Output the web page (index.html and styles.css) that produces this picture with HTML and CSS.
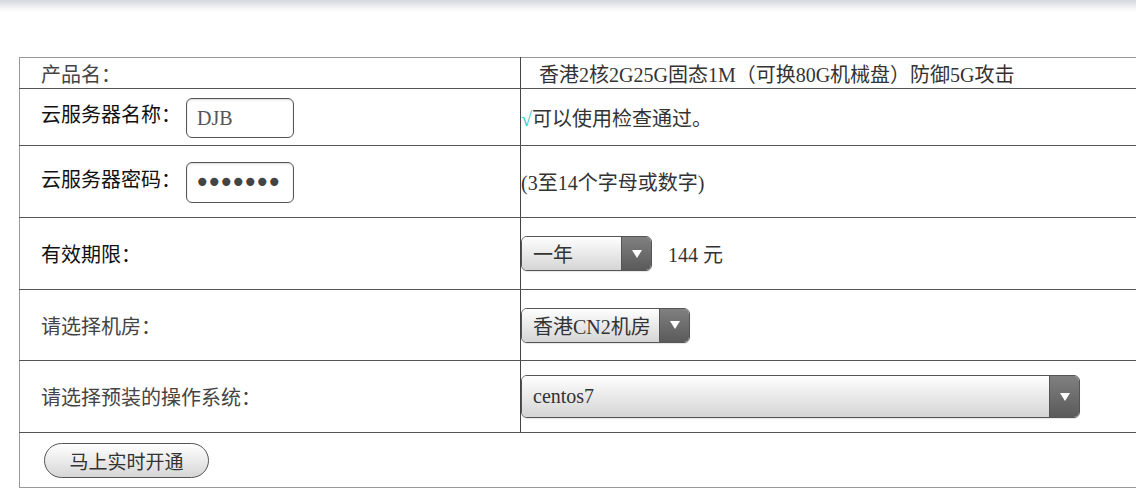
FILE: index.html
```html
<!DOCTYPE html>
<html lang="zh-CN">
<head>
<meta charset="utf-8">
<title>云服务器开通</title>
<link rel="stylesheet" href="styles.css">
</head>
<body>
<div class="topbar"></div>
<div class="page">
  <table class="order">
    <colgroup><col class="c1"><col class="c2"></colgroup>
    <tr class="r1">
      <td class="lbl muted">产品名：</td>
      <td class="val pname">香港2核2G25G固态1M（可换80G机械盘）防御5G攻击</td>
    </tr>
    <tr class="r2">
      <td class="lbl">云服务器名称：<input class="field" type="text" value="DJB"></td>
      <td class="val"><span class="ok">√</span>可以使用检查通过。</td>
    </tr>
    <tr class="r3">
      <td class="lbl">云服务器密码：<input class="field pw" type="password" value="1234567"></td>
      <td class="val">(3至14个字母或数字)</td>
    </tr>
    <tr class="r4">
      <td class="lbl">有效期限：</td>
      <td class="val">
        <div class="sel year"><span class="v">一年</span><span class="a"><i class="tri"></i></span></div><span class="price">144 元</span>
      </td>
    </tr>
    <tr class="r5">
      <td class="lbl muted">请选择机房：</td>
      <td class="val">
        <div class="sel room"><span class="v">香港CN2机房</span><span class="a"><i class="tri"></i></span></div>
      </td>
    </tr>
    <tr class="r6">
      <td class="lbl muted">请选择预装的操作系统：</td>
      <td class="val">
        <div class="sel os"><span class="v">centos7</span><span class="a"><i class="tri"></i></span></div>
      </td>
    </tr>
    <tr class="r7">
      <td class="btncell" colspan="2"><button class="btn" type="button">马上实时开通</button></td>
    </tr>
  </table>
</div>
</body>
</html>
```

FILE: styles.css
```css
html, body {
  margin: 0;
  padding: 0;
  overflow: hidden;
  background: #fff;
}
body {
  font-family: "Liberation Serif", "Noto Sans CJK SC", serif;
  font-size: 20px;
  color: #222;
}
.topbar {
  height: 12px;
  background: linear-gradient(#d3d8dd, #f4f5f6 70%, #fff);
}
.page {
  padding: 45px 0 0 19px;
}
.order {
  border-collapse: collapse;
  table-layout: fixed;
  width: 1140px;
  border: 1px solid #999;
}
.c1 { width: 501px; }
.order td {
  padding: 0;
  vertical-align: middle;
  border-top: 1px solid #555;
  border-bottom: 1px solid #555;
}
.order tr:first-child td { border-top: 1px solid #999; }
.order tr:last-child td { border-bottom: 1px solid #999; }
.lbl {
  padding-left: 21px !important;
  border-right: 1px solid #444;
  font-family: "Noto Sans CJK SC", sans-serif;
  color: #111;
  white-space: nowrap;
}
.lbl.muted { color: #444; }
.val { color: #333; white-space: nowrap; }
.pname { padding-left: 18px !important; }
.r1 { height: 31px; }
.r2 { height: 57px; }
.r3 { height: 72px; }
.r4 { height: 72px; }
.r5 { height: 71px; }
.r6 { height: 72px; }
.r7 { height: 55px; }

.ok { color: #1fc6c8; }

.field {
  box-sizing: border-box;
  width: 108px;
  height: 40px;
  margin: 2px 0 0 5px;
  padding: 0 0 0 10px;
  border: 1px solid #555;
  border-radius: 6px;
  background: #fff;
  box-shadow: inset 0 1px 2px rgba(0,0,0,0.15);
  font: 20px "Liberation Serif", serif;
  color: #555;
  vertical-align: middle;
}
.field.pw {
  height: 41px;
  padding-left: 7px;
  font: 28px/1 "DejaVu Sans", sans-serif;
  letter-spacing: -4.5px;
  color: #444;
}

.sel {
  display: inline-flex;
  box-sizing: border-box;
  height: 35px;
  border: 1px solid #555;
  border-radius: 6px;
  overflow: hidden;
  vertical-align: middle;
  box-shadow: 0 1px 1px rgba(0,0,0,0.1);
}
.sel .v {
  flex: 1;
  display: flex;
  align-items: center;
  padding-left: 11px;
  background: linear-gradient(#fefefe, #d5d5d5);
  color: #333;
}
.sel .a {
  width: 29px;
  display: flex;
  align-items: center;
  justify-content: center;
  border-left: 1px solid #555;
  background: linear-gradient(#808080, #5a5a5a);
}
.tri {
  width: 0;
  height: 0;
  border-left: 5px solid transparent;
  border-right: 5px solid transparent;
  border-top: 8px solid #fff;
}
.year { width: 131px; }
.room { width: 169px; }
.os { width: 559px; height: 43px; }
.price {
  margin-left: 16px;
  vertical-align: middle;
  color: #333;
}

.btn {
  box-sizing: border-box;
  width: 165px;
  height: 35px;
  margin-left: 24px;
  border: 1px solid #555;
  border-radius: 18px;
  background: linear-gradient(#fff, #d6d6d6);
  font-family: "Noto Sans CJK SC", sans-serif;
  font-size: 19px;
  color: #333;
  padding: 0;
  line-height: 1;
  vertical-align: middle;
}
```
